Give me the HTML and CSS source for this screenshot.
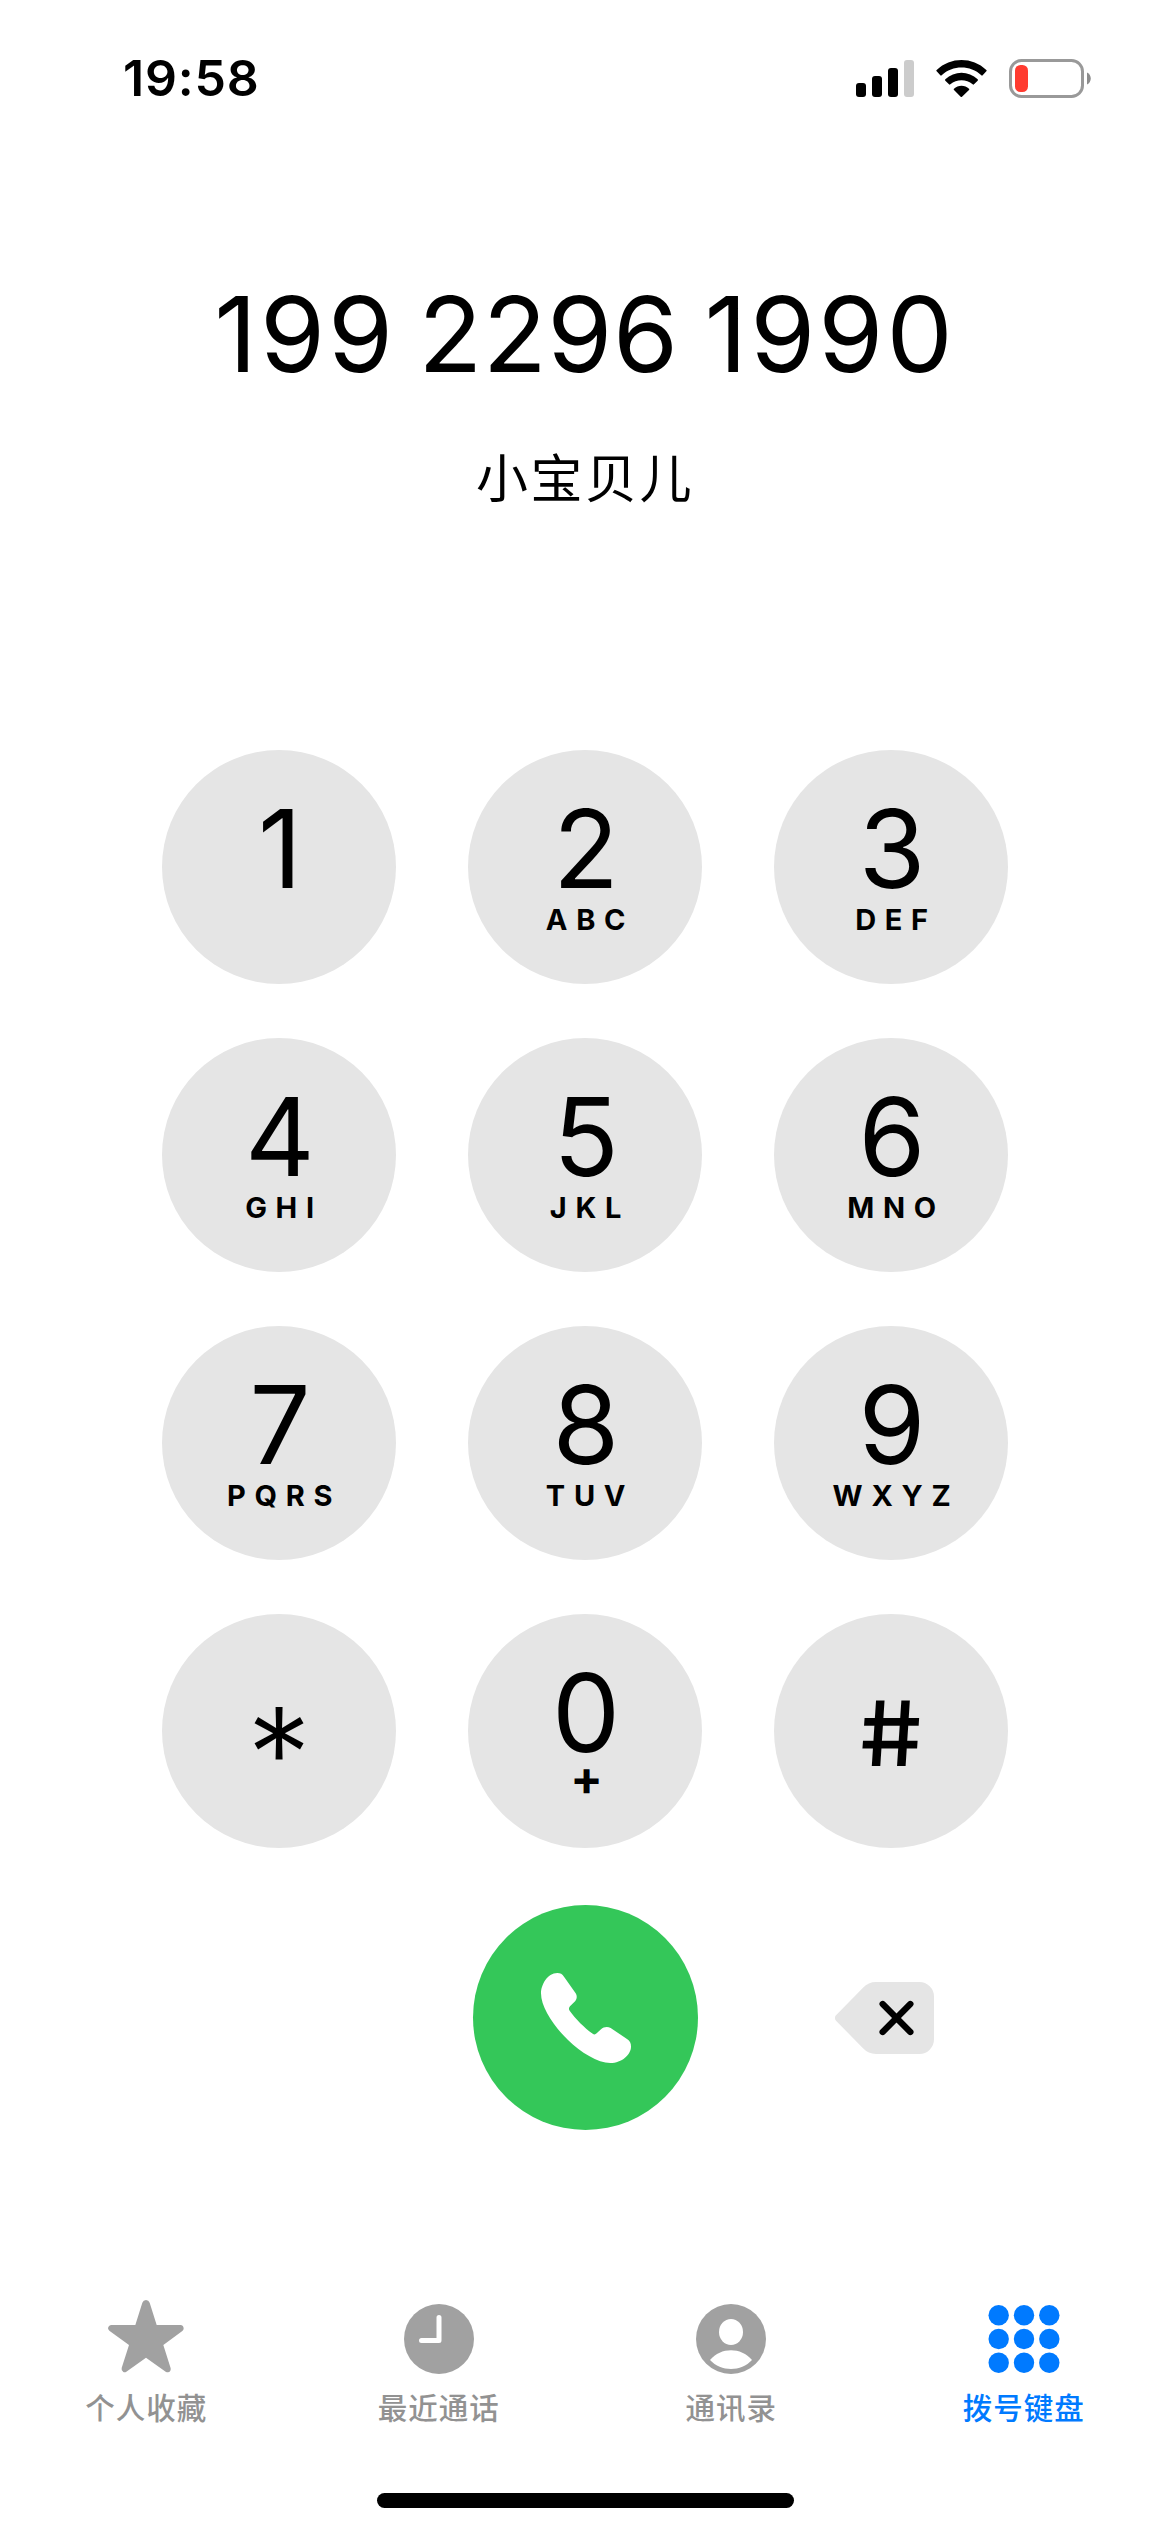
FILE: index.html
```html
<!DOCTYPE html>
<html lang="zh-CN">
<head>
<meta charset="utf-8">
<title>拨号键盘</title>
<link rel="stylesheet" href="styles.css">
</head>
<body>
<header class="status-bar">
  <time class="clock">19:58</time>
  <div class="status-icons">
    <svg class="signal" viewBox="0 0 58 37" width="58" height="37">
      <rect x="0" y="23" width="10" height="14" rx="3"/>
      <rect x="16" y="16" width="10" height="21" rx="3"/>
      <rect x="32" y="8" width="10" height="29" rx="3"/>
      <rect class="signal-off" x="48" y="0" width="10" height="37" rx="3"/>
    </svg>
    <svg class="wifi" viewBox="288 57 153 111" width="51" height="37">
      <path d="M290 87C332 47 397 47 439 87Q441 89 439 91L428 103Q426 105 424 103C391 72 338 72 305 103Q303 105 301 103L290 91Q288 89 290 87Z"/>
      <path d="M316 115C343 89 386 89 413 115Q415 117 413 119L402 130Q400 132 398 130C379 114 350 114 331 130Q329 132 327 130L316 119Q314 117 316 115Z"/>
      <path d="M342 143C354 131 375 131 387 143Q389 145 387 147L366 167Q364 169 362 167L342 147Q340 145 342 143Z"/>
    </svg>
    <svg class="battery" viewBox="0 0 82 39" width="82" height="39">
      <rect class="battery-shell" x="1.5" y="1.5" width="72" height="36" rx="11"/>
      <rect class="battery-level" x="6" y="6" width="13" height="27" rx="5.5"/>
      <path class="battery-cap" d="M78 13.5C83 15.500 83 23.500 78 25.500Z"/>
    </svg>
  </div>
</header>

<main class="dialer">
  <section class="entry">
    <h1 class="number">199 <span class="number-middle">2296</span> 1990</h1>
    <p class="contact">小宝贝儿</p>
  </section>

  <section class="keypad">
    <button class="key"><span class="digit">1</span></button>
    <button class="key"><span class="digit">2</span><span class="letters">ABC</span></button>
    <button class="key"><span class="digit">3</span><span class="letters">DEF</span></button>
    <button class="key"><span class="digit">4</span><span class="letters">GHI</span></button>
    <button class="key"><span class="digit">5</span><span class="letters">JKL</span></button>
    <button class="key"><span class="digit">6</span><span class="letters">MNO</span></button>
    <button class="key"><span class="digit">7</span><span class="letters">PQRS</span></button>
    <button class="key"><span class="digit">8</span><span class="letters">TUV</span></button>
    <button class="key"><span class="digit">9</span><span class="letters">WXYZ</span></button>
    <button class="key"><span class="star">*</span></button>
    <button class="key"><span class="digit">0</span><span class="plus">+</span></button>
    <button class="key"><span class="hash">#</span></button>
  </section>

  <section class="actions">
    <button class="call" aria-label="呼叫">
      <svg viewBox="39 45 675 675" width="225" height="225">
        <path d="M243 310C243 285 262 249 292 249C301 249 307 252 312 260L347 310C352 318 351 326 346 333L330 349C326 353 326 358 329 362C346 386 374 414 398 431C402 434 406 434 410 430L423 418C431 410 443 409 452 414L501 447C510 453 513 460 513 470C513 493 486 519 451 519C414 519 361 487 324 450C281 409 243 352 243 310Z"/>
      </svg>
    </button>
    <button class="erase" aria-label="删除">
      <svg viewBox="1125 276 297 216" width="99" height="72">
        <path class="erase-shape" d="M1128 376L1209 293Q1225 276 1248 276H1378A44 44 0 0 1 1422 320V448A44 44 0 0 1 1378 492H1248Q1225 492 1209 475L1128 392Q1121 384 1128 376Z"/>
        <path class="erase-cross" d="M1268 342L1351 426M1351 342L1268 426"/>
      </svg>
    </button>
  </section>
</main>

<nav class="tabs">
  <a class="tab">
    <svg viewBox="0 12 228 228" width="76" height="76">
      <path d="M103 20Q106 12 114 12Q122 12 125 20L146 87H217Q227 88 227 98Q227 101 223 105L166 147L188 217Q189 228 180 229Q176 229 173 227L114 185L55 227Q51 230 46 228Q39 224 41 216L63 147L5 105Q0 101 0 97Q1 88 11 87H82Z"/>
    </svg>
    <span class="tab-label">个人收藏</span>
  </a>
  <a class="tab">
    <svg viewBox="0 0 76 76" width="76" height="76">
      <circle cx="38" cy="39" r="35"/>
      <path class="hands" d="M38 17.500V40.500H20.500"/>
    </svg>
    <span class="tab-label">最近通话</span>
  </a>
  <a class="tab">
    <svg viewBox="0 0 76 76" width="76" height="76">
      <circle cx="38" cy="39" r="35"/>
      <ellipse class="cutout" cx="38" cy="32" rx="12" ry="13"/>
      <path class="cutout" d="M17 60C28 47 48 47 59 60C48 72 28 72 17 60Z"/>
    </svg>
    <span class="tab-label">通讯录</span>
  </a>
  <a class="tab tab-active">
    <svg viewBox="0 0 76 76" width="76" height="76">
      <circle cx="12.700" cy="15.300" r="10.200"/><circle cx="38" cy="15.300" r="10.200"/><circle cx="63.300" cy="15.300" r="10.200"/>
      <circle cx="12.700" cy="39" r="10.200"/><circle cx="38" cy="39" r="10.200"/><circle cx="63.300" cy="39" r="10.200"/>
      <circle cx="12.700" cy="62.700" r="10.200"/><circle cx="38" cy="62.700" r="10.200"/><circle cx="63.300" cy="62.700" r="10.200"/>
    </svg>
    <span class="tab-label">拨号键盘</span>
  </a>
</nav>
<div class="home-indicator"></div>
</body>
</html>
```
FILE: styles.css
```css
* {
  box-sizing: border-box;
}

body {
  width: 1170px;
  height: 2532px;
  margin: 0;
  display: flex;
  flex-direction: column;
  background: #fff;
  color: #000;
  font-family: Inter, "Noto Sans CJK SC", sans-serif;
  overflow: hidden;
}

button {
  padding: 0;
  border: 0;
  background: none;
  color: inherit;
  font: inherit;
}

svg {
  display: block;
}

.status-bar {
  height: 156px;
  padding: 0 79px 0 123px;
  display: flex;
  align-items: center;
  justify-content: space-between;
}

.clock {
  font-size: 50px;
  font-weight: 600;
  line-height: 60px;
  letter-spacing: 0.8px;
}

.status-icons {
  display: flex;
  align-items: center;
  gap: 22px;
}

.signal-off {
  fill: #ccc;
}

.battery-shell {
  fill: none;
  stroke: #999;
  stroke-width: 3;
}

.battery-level {
  fill: #ff3b30;
}

.battery-cap {
  fill: #8c8c8c;
}

.entry {
  height: 594px;
  padding-top: 118px;
  text-align: center;
}

.number {
  margin: 0;
  font-size: 105px;
  font-weight: 400;
  line-height: 120px;
  letter-spacing: 3px;
  word-spacing: -10.5px;
}

.number-middle {
  padding-right: 4px;
  letter-spacing: 0.5px;
}

.contact {
  margin: 49px 0 0;
  font-size: 52px;
  font-weight: 400;
  line-height: 74px;
  letter-spacing: 2.5px;
}

.keypad {
  display: grid;
  grid-template-columns: repeat(3, 234px);
  grid-auto-rows: 234px;
  gap: 54px 72px;
  justify-content: center;
}

.key {
  padding-top: 43px;
  display: flex;
  flex-direction: column;
  align-items: center;
  border-radius: 50%;
  background: #e5e5e5;
}

.digit {
  padding-left: 2px;
  font-size: 108px;
  line-height: 112px;
}

.letters {
  padding-left: 10px;
  font-size: 29px;
  font-weight: 700;
  line-height: 30px;
  letter-spacing: 8.7px;
}

.plus {
  padding-left: 3px;
  font-size: 48px;
  font-weight: 700;
  line-height: 17px;
}

.star {
  font-size: 128px;
  font-weight: 350;
  line-height: 193px;
}

.hash {
  font-size: 90px;
  font-weight: 450;
  line-height: 153px;
  transform: scaleX(1.1) skewX(6deg);
}

.actions {
  margin-top: 57px;
  display: grid;
  grid-template-columns: repeat(3, 234px);
  column-gap: 72px;
  justify-content: center;
  align-items: center;
}

.call {
  grid-column: 2;
  width: 225px;
  height: 225px;
  justify-self: center;
  border-radius: 50%;
  background: #34c759;
  fill: #fff;
}

.erase {
  margin-left: 61px;
  justify-self: start;
}

.erase-shape {
  fill: #e5e5e5;
}

.erase-cross {
  fill: none;
  stroke: #000;
  stroke-width: 19;
  stroke-linecap: round;
}

.tabs {
  margin-top: 170px;
  height: 193px;
  display: grid;
  grid-template-columns: repeat(4, 1fr);
}

.tab {
  display: flex;
  flex-direction: column;
  align-items: center;
  color: #929292;
  fill: #a1a1a1;
}

.tab-active {
  color: #007aff;
  fill: #007aff;
}

.tab-label {
  margin-top: 11px;
  font-size: 29.5px;
  font-weight: 500;
  line-height: 42px;
  letter-spacing: 1px;
}

.hands {
  fill: none;
  stroke: #fff;
  stroke-width: 5;
  stroke-linecap: round;
  stroke-linejoin: round;
}

.cutout {
  fill: #fff;
}

.home-indicator {
  width: 417px;
  height: 15px;
  align-self: center;
  border-radius: 8px;
  background: #000;
}
```
